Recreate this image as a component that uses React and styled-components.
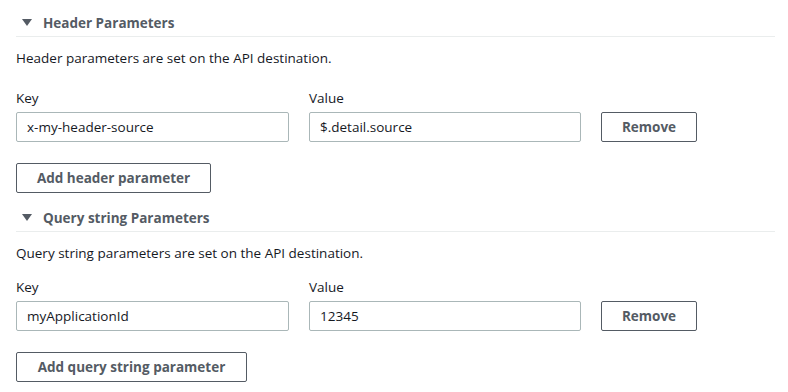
import React from "react";
import styled, { createGlobalStyle } from "styled-components";

const Global = createGlobalStyle`
  html, body { margin: 0; padding: 0; background: #ffffff; }
  body { font-family: "Open Sans", "Noto Sans", Arial, sans-serif; color: #16191f; }
  * { box-sizing: border-box; }
`;

const Page = styled.div`
  width: 788px;
  padding: 8px 13px 0 16px;
  display: flex;
  flex-direction: column;
  gap: 10px;
`;

const Section = styled.section`
  display: flex;
  flex-direction: column;
`;

const SectionHeader = styled.div`
  display: flex;
  align-items: center;
  gap: 11px;
  height: 29px;
  padding-left: 6px;
  padding-top: 1px;
  border-bottom: 1px solid #eaeded;
  font-size: 13.5px;
  font-weight: 700;
  color: #545b64;
`;

const Caret = styled.svg`
  width: 10px;
  height: 7px;
  flex: none;
`;

const Description = styled.p`
  margin: 11px 0 0;
  font-size: 13.5px;
  line-height: 20px;
  color: #16191f;
`;

const Row = styled.div`
  display: flex;
  align-items: flex-end;
  gap: 20px;
  margin-top: ${(p) => p.$top}px;
`;

const Field = styled.div`
  display: flex;
  flex-direction: column;
  gap: 5px;
  width: ${(p) => p.$width}px;
`;

const Label = styled.label`
  font-size: 13.5px;
  line-height: 18px;
  color: #16191f;
`;

const Input = styled.div`
  height: 30px;
  border: 1px solid #aab7b8;
  border-radius: 2px;
  padding: 0 10px;
  display: flex;
  align-items: center;
  font-size: 13.5px;
  color: #16191f;
`;

const Button = styled.button`
  height: 30px;
  width: ${(p) => p.$width}px;
  border: 1px solid #545b64;
  border-radius: 2px;
  background: #ffffff;
  font-family: inherit;
  font-size: 13.5px;
  font-weight: 700;
  color: #545b64;
  padding: 0 10px;
  white-space: nowrap;
`;

const ButtonRow = styled.div`
  display: flex;
  margin-top: 21px;
`;

function CaretIcon() {
  return (
    <Caret viewBox="0 0 10 7">
      <path d="M0 0 L10 0 L5 7 Z" fill="#545b64" />
    </Caret>
  );
}

function ParamSection({ title, description, keyValue, value, addLabel, addWidth, labelTop }) {
  return (
    <Section>
      <SectionHeader>
        <CaretIcon />
        <span>{title}</span>
      </SectionHeader>
      <Description>{description}</Description>
      <Row $top={labelTop}>
        <Field $width={273}>
          <Label>Key</Label>
          <Input>{keyValue}</Input>
        </Field>
        <Field $width={272}>
          <Label>Value</Label>
          <Input>{value}</Input>
        </Field>
        <Button $width={96}>Remove</Button>
      </Row>
      <ButtonRow>
        <Button $width={addWidth}>{addLabel}</Button>
      </ButtonRow>
    </Section>
  );
}

export default function App() {
  return (
    <>
      <Global />
      <Page>
        <ParamSection
          title="Header Parameters"
          description="Header parameters are set on the API destination."
          keyValue="x-my-header-source"
          value="$.detail.source"
          addLabel="Add header parameter"
          addWidth={195}
          labelTop={21}
        />
        <ParamSection
          title="Query string Parameters"
          description="Query string parameters are set on the API destination."
          keyValue="myApplicationId"
          value="12345"
          addLabel="Add query string parameter"
          addWidth={231}
          labelTop={15}
        />
      </Page>
    </>
  );
}
